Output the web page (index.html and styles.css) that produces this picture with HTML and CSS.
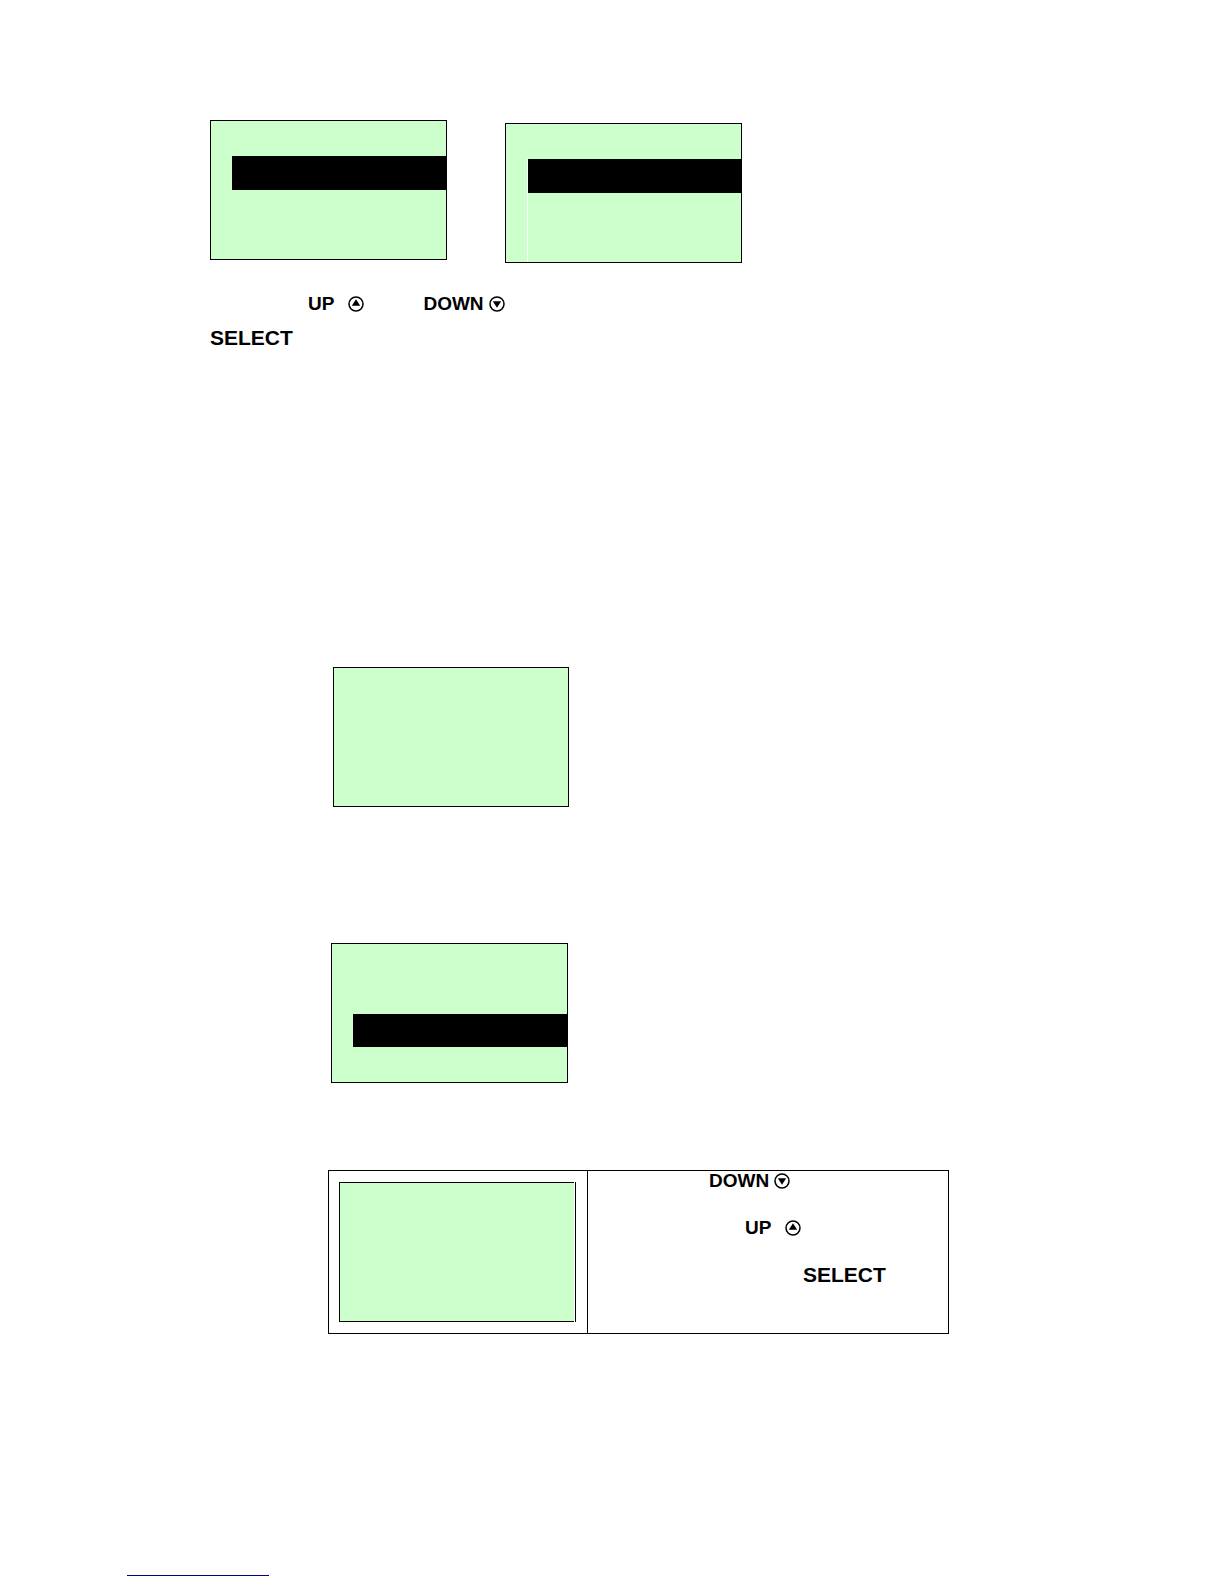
FILE: index.html
```html
<!DOCTYPE html>
<html lang="en">
  <head>
    <meta charset="UTF-8" />
    <meta name="viewport" content="width=device-width, initial-scale=1.0" />
    <title>Panel Menu Screens</title>
    <link rel="stylesheet" href="styles.css">
  </head>
  <body>
    <main class="page">
      <section class="menus">
        <div class="screen">
          <div class="selected"></div>
        </div>
        <div class="screen screen-lower">
          <div class="selected"></div>
          <div class="list"></div>
        </div>
      </section>

      <section class="keys">
        <p class="line line-arrows">
          <span class="key key-up">
            <b>UP</b>
            <svg class="icon" viewBox="0 0 16 16" aria-hidden="true">
              <circle cx="8" cy="8" r="7" fill="none" stroke="#000" stroke-width="1.5" />
              <path d="M8 3.2 L12.2 9.8 H3.8 Z" />
            </svg>
          </span>
          <span class="key key-down">
            <b>DOWN</b>
            <svg class="icon" viewBox="0 0 16 16" aria-hidden="true">
              <circle cx="8" cy="8" r="7" fill="none" stroke="#000" stroke-width="1.5" />
              <path d="M3.8 5.2 H12.2 L8 11.8 Z" />
            </svg>
          </span>
        </p>
        <p class="line"><b class="select">SELECT</b></p>
      </section>

      <section class="step step-blank">
        <div class="screen screen-narrow"></div>
      </section>

      <section class="step step-option">
        <div class="screen">
          <div class="selected selected-second"></div>
        </div>
      </section>

      <table class="guide">
        <tr>
          <td class="guide-screen">
            <div class="frame"><div class="fill"></div></div>
          </td>
          <td class="guide-keys">
            <p class="line line-down">
              <span class="key key-down">
                <b>DOWN</b>
                <svg class="icon" viewBox="0 0 16 16" aria-hidden="true">
                  <circle cx="8" cy="8" r="7" fill="none" stroke="#000" stroke-width="1.5" />
                  <path d="M3.8 5.2 H12.2 L8 11.8 Z" />
                </svg>
              </span>
            </p>
            <p class="line line-up">
              <span class="key key-up">
                <b>UP</b>
                <svg class="icon" viewBox="0 0 16 16" aria-hidden="true">
                  <circle cx="8" cy="8" r="7" fill="none" stroke="#000" stroke-width="1.5" />
                  <path d="M8 3.2 L12.2 9.8 H3.8 Z" />
                </svg>
              </span>
            </p>
            <p class="line line-select"><b class="select">SELECT</b></p>
          </td>
        </tr>
      </table>

      <footer class="footer">
        <a class="site-link" href="#" aria-label="Website"></a>
      </footer>
    </main>
  </body>
</html>
```
FILE: styles.css
```css
* {
  box-sizing: border-box;
}
body {
  margin: 0;
  background-color: #fff;
  color: #000;
  font-family: "Liberation Sans", Arial, sans-serif;
  font-size: 19px;
  line-height: 22px;
}
p {
  margin: 0;
}
.page {
  padding: 120px 275px 8px 210px;
}

/* LCD screens */
.menus {
  display: flex;
  align-items: flex-start;
  gap: 58px;
}
.screen {
  display: flex;
  flex-direction: column;
  width: 237px;
  height: 140px;
  padding: 35px 0 0 21px;
  border: 1px solid #000;
  background-color: #cfc;
}
.screen-lower {
  margin-top: 3px;
}
.screen-narrow {
  width: 236px;
}
.selected {
  height: 34px;
  background-color: #000;
}
.screen-lower .selected {
  border-left: 1px solid #fff;
}
.list {
  flex: 1;
  border-left: 1px solid #fff;
}
.selected-second {
  height: 33px;
  margin-top: 35px;
}

/* key names */
.keys {
  display: flex;
  flex-direction: column;
  gap: 12px;
  margin-top: 30px;
}
.line {
  display: flex;
}
.line-arrows {
  gap: 59px;
  padding-left: 98px;
}
.key {
  display: flex;
  align-items: center;
}
.key-up {
  gap: 14px;
}
.key-down {
  gap: 5px;
}
.icon {
  width: 16px;
  height: 16px;
}
.select {
  font-size: 21px;
}

.step {
  padding-left: 121px;
}
.step-blank {
  margin-top: 318px;
  padding-left: 123px;
}
.step-option {
  margin-top: 136px;
}

/* table with screen and keys */
.guide {
  width: calc(100% - 118px);
  margin: 87px 0 0 118px;
  border: 1px solid #000;
  border-spacing: 0;
}
.guide td {
  padding: 0;
  vertical-align: top;
}
.guide .guide-screen {
  width: 259px;
  padding: 11px 11px 11px 10px;
  border-right: 1px solid #000;
}
.frame {
  height: 140px;
  padding-right: 1px;
  border-right: 1px solid #000;
}
.fill {
  height: 100%;
  border: 1px solid #000;
  border-right: none;
  background-color: #cfc;
}
.guide-keys {
  line-height: 20px;
}
.guide-keys .line + .line {
  margin-top: 27px;
}
.line-down {
  padding-left: 121px;
}
.line-up {
  padding-left: 157px;
}
.line-select {
  padding-left: 215px;
}

.footer {
  margin-top: 219px;
}
.site-link {
  display: block;
  width: 142px;
  height: 23px;
  margin-left: -83px;
  border-bottom: 1px solid #00008b;
}
```
